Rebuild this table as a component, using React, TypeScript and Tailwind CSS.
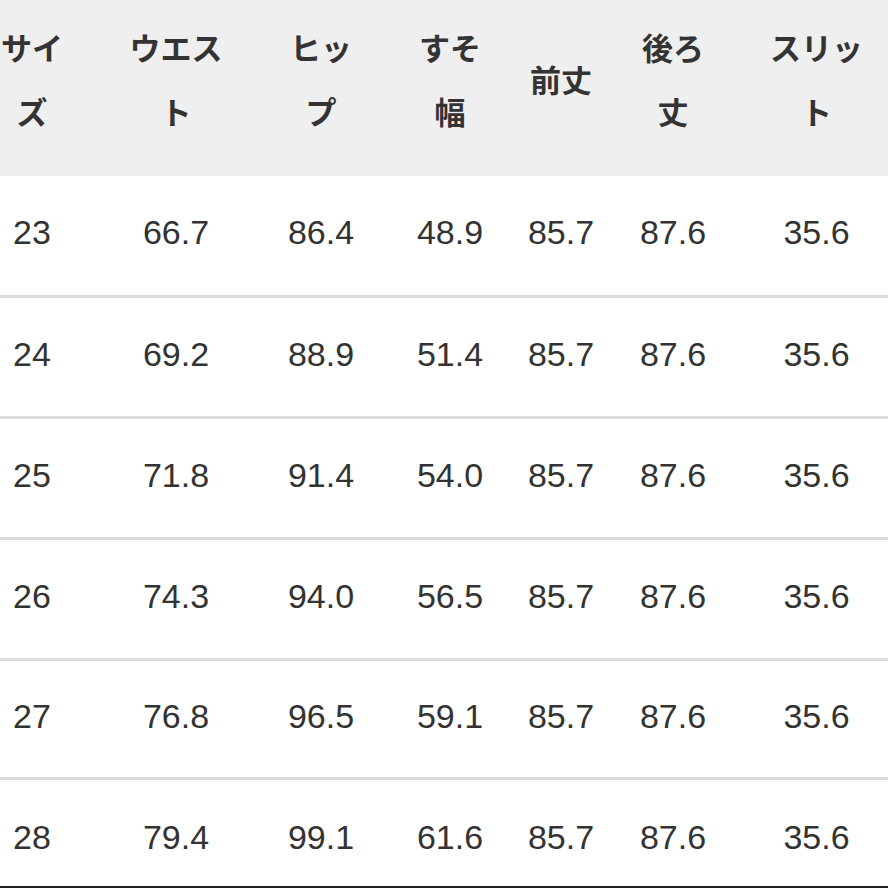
import React from "react";

const jp = { fontFamily: '"Noto Sans CJK JP", "Noto Sans", sans-serif' };
const num = { fontFamily: '"Liberation Sans", Arial, sans-serif' };

const colCls = [
  "pr-[40px]",
  "",
  "pl-[9px]",
  "pl-[10px]",
  "",
  "pr-[16px]",
  "",
];

const headers: string[][] = [
  ["サイ", "ズ"],
  ["ウエス", "ト"],
  ["ヒッ", "プ"],
  ["すそ", "幅"],
  ["前丈"],
  ["後ろ", "丈"],
  ["スリッ", "ト"],
];

const rows: string[][] = [
  ["23", "66.7", "86.4", "48.9", "85.7", "87.6", "35.6"],
  ["24", "69.2", "88.9", "51.4", "85.7", "87.6", "35.6"],
  ["25", "71.8", "91.4", "54.0", "85.7", "87.6", "35.6"],
  ["26", "74.3", "94.0", "56.5", "85.7", "87.6", "35.6"],
  ["27", "76.8", "96.5", "59.1", "85.7", "87.6", "35.6"],
  ["28", "79.4", "99.1", "61.6", "85.7", "87.6", "35.6"],
];

const grid = "grid grid-cols-[104px_144px_137px_120px_112px_128px_143px]";

const rowH = [
  "h-[122px] pb-[6px] border-b-[3px] border-[#dcdcdc]",
  "h-[121px] pb-[6px] border-b-[3px] border-[#dcdcdc]",
  "h-[121px] pb-[6px] border-b-[3px] border-[#dcdcdc]",
  "h-[121px] pb-[6px] border-b-[3px] border-[#dcdcdc]",
  "h-[119px] pb-[6px] border-b-[3px] border-[#dcdcdc]",
  "h-[106px] pt-[8px]",
];

export default function App() {
  return (
    <div className="w-[888px] h-[888px] bg-white overflow-hidden flex flex-col">
      <div
        className={`${grid} shrink-0 h-[176px] bg-[#efefef] pt-[15px] pb-[33px]`}
        style={jp}
      >
        {headers.map((h, i) => (
          <div
            key={i}
            className={`flex flex-col items-center justify-center text-[31px] leading-[64px] font-bold text-[#333333] whitespace-nowrap ${colCls[i]}`}
          >
            {h.map((l, j) => (
              <span key={j}>{l}</span>
            ))}
          </div>
        ))}
      </div>
      {rows.map((r, ri) => (
        <div key={ri} className={`${grid} shrink-0 ${rowH[ri]}`} style={num}>
          {r.map((v, ci) => (
            <div
              key={ci}
              className={`flex items-center justify-center text-[34px] text-[#333333] ${colCls[ci]}`}
            >
              {v}
            </div>
          ))}
        </div>
      ))}
      <div className="shrink-0 h-[2px] bg-[#222222]" />
    </div>
  );
}
